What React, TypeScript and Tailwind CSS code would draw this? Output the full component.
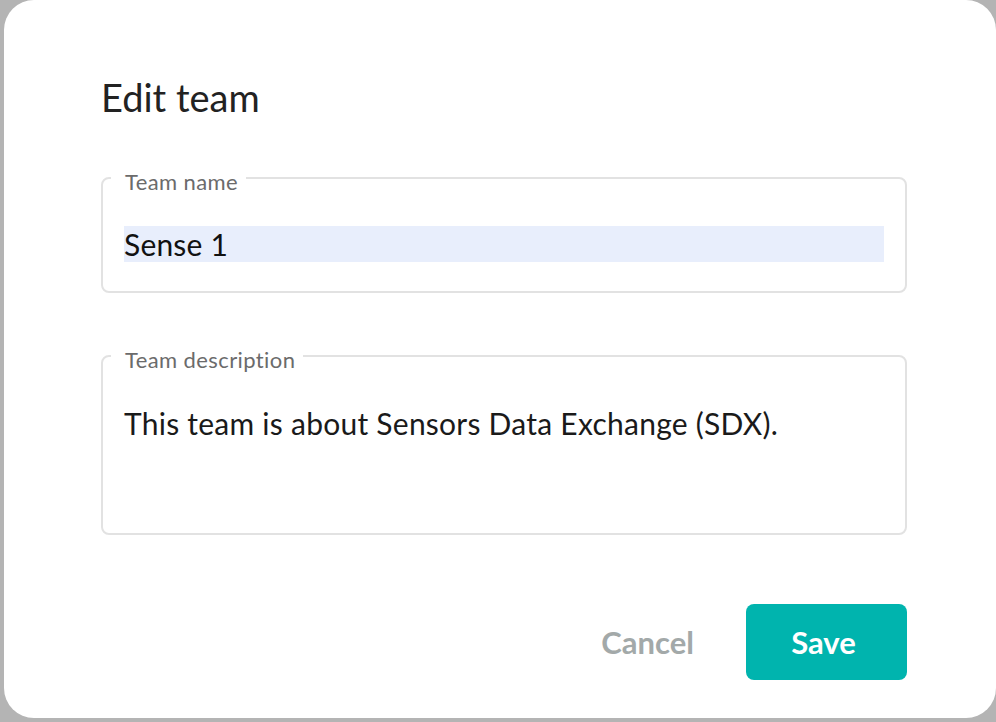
export default function App() {
  return (
    <div className="w-[996px] h-[722px] bg-[#b4b4b4] pl-[4px] pb-[4px] overflow-hidden font-['Lato',sans-serif]">
      <div className="h-full bg-white rounded-[30px] pl-[97px] pr-[89px] pt-[74px]">
        <h2 className="text-[38px] leading-[46px] text-[#222222]">Edit team</h2>

        <fieldset className="mt-[42px] border-2 border-[#e2e2e2] rounded-[8px] px-[21px] pt-[32px] pb-[29px]">
          <legend className="ml-[-13px] pl-[14px] pr-[8px] pt-[8px] text-[22px] leading-[24px] tracking-[0.4px] text-[#6b6b6b]">
            Team name
          </legend>
          <div className="h-[36px] bg-[#e8eefc] text-[30px] leading-[36px] tracking-[0.2px] text-[#111111]">
            Sense 1
          </div>
        </fieldset>

        <fieldset className="mt-[47px] border-2 border-[#e2e2e2] rounded-[8px] px-[21px] pt-[33px] pb-[92px]">
          <legend className="ml-[-13px] pl-[14px] pr-[8px] pt-[8px] text-[22px] leading-[24px] tracking-[0.4px] text-[#6b6b6b]">
            Team description
          </legend>
          <div className="h-[36px] text-[30px] leading-[36px] tracking-[0.25px] text-[#1a1a1a]">
            This team is about Sensors Data Exchange (SDX).
          </div>
        </fieldset>

        <div className="mt-[69px] flex items-center justify-end gap-[52px]">
          <button className="text-[31px] font-bold text-[#a3a9a9]">Cancel</button>
          <button className="w-[161px] h-[76px] rounded-[8px] bg-[#00b4ae] text-[31px] font-bold text-white pr-[6px]">
            Save
          </button>
        </div>
      </div>
    </div>
  );
}
